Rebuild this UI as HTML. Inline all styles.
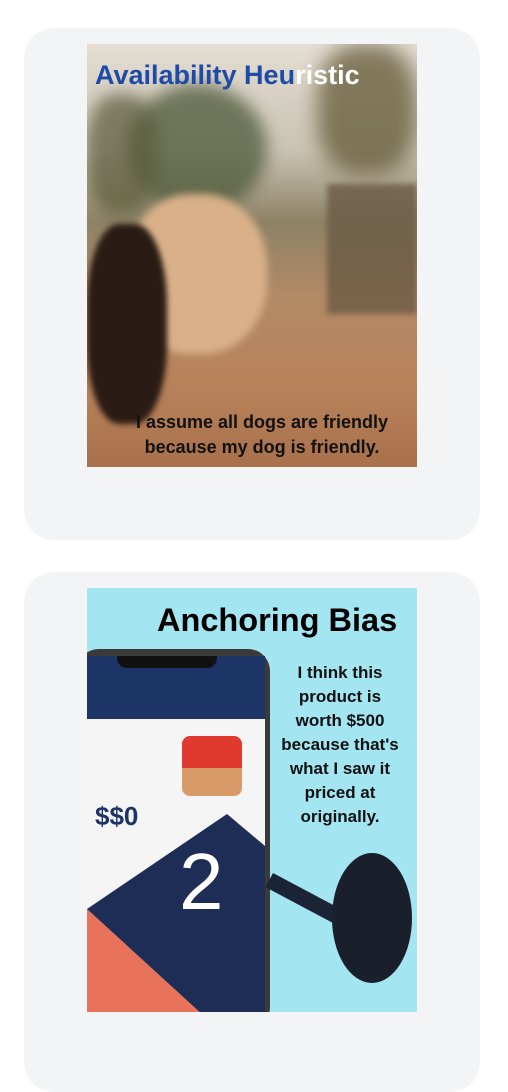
<!DOCTYPE html>
<html><head><style>
body{margin:0;width:508px;height:1066px;background:#fff;position:relative;overflow:hidden;font-family:"Liberation Sans",sans-serif}
.card{position:absolute;left:24px;width:456px;background:#f3f4f6;border-radius:30px}
.img{position:absolute;left:87px;width:330px;overflow:hidden}
.t{position:absolute;font-weight:bold;white-space:nowrap}
</style></head><body>
<div class="card" style="top:28px;height:512px"></div>
<div class="card" style="top:572px;height:520px"></div>

<div class="img" style="top:44px;height:423px;background:linear-gradient(180deg,#e4ddd3 0%,#c9c3b2 25%,#8d8266 42%,#b38a66 60%,#b8825a 80%,#a8714c 100%)">
  <div style="position:absolute;left:40px;top:40px;width:140px;height:130px;border-radius:50%;background:#4e5a3a;opacity:.75;filter:blur(8px)"></div>
  <div style="position:absolute;left:0;top:50px;width:70px;height:120px;border-radius:40%;background:#5a5a3a;opacity:.7;filter:blur(8px)"></div>
  <div style="position:absolute;left:230px;top:0;width:100px;height:130px;border-radius:40%;background:#5d5330;opacity:.7;filter:blur(10px)"></div>
  <div style="position:absolute;left:240px;top:140px;width:90px;height:130px;background:#6b5a44;opacity:.8;filter:blur(3px)"></div>
  <div style="position:absolute;left:40px;top:150px;width:140px;height:160px;border-radius:45%;background:#d9b089;filter:blur(4px)"></div>
  <div style="position:absolute;left:0;top:180px;width:80px;height:200px;border-radius:40%;background:#2a1c14;filter:blur(3px)"></div>
  <div class="t" style="left:8px;top:16px;font-size:27px;color:#1f4aa8">Availability Heu<span style="color:#fff">ristic</span></div>
  <div class="t" style="left:45px;width:260px;text-align:center;top:366px;font-size:18px;line-height:25px;color:#111">I assume all dogs are friendly<br>because my dog is friendly.</div>
</div>

<div class="img" style="top:588px;height:424px;background:#a3e5f0">
  <div style="position:absolute;left:-10px;top:61px;width:193px;height:380px;border-radius:22px;background:#3a3a3a"></div>
  <div style="position:absolute;left:0;top:68px;width:178px;height:360px;background:#f5f5f5;overflow:hidden">
    <div style="position:absolute;left:0;top:0;width:178px;height:63px;background:#1d3466"></div>
    <div style="position:absolute;left:30px;top:0;width:100px;height:12px;background:#111;border-radius:0 0 10px 10px"></div>
    <svg style="position:absolute;left:0;top:0" width="178" height="360"><polygon points="0,253 0,360 117,360" fill="#e8735a"/><polygon points="0,253 140,158 178,190 178,360 117,360" fill="#1e2d55"/></svg>
    <div style="position:absolute;left:95px;top:80px;width:60px;height:40px;background:#e03a30;border-radius:8px"></div>
    <div style="position:absolute;left:95px;top:112px;width:60px;height:28px;background:#d99a6a;border-radius:0 0 8px 8px"></div>
    <div class="t" style="left:8px;top:145px;font-size:26px;color:#1d3466">$$0</div>
    <div class="t" style="left:92px;top:180px;font-size:80px;color:#fff;font-weight:normal">2</div>
  </div>
  <div style="position:absolute;left:186px;top:285px;width:90px;height:16px;background:#1b2436;transform:rotate(28deg);transform-origin:0 0"></div>
  <div style="position:absolute;left:245px;top:265px;width:80px;height:130px;border-radius:50%;background:#1a1f2c"></div>
  <div class="t" style="left:70px;top:14px;font-size:32.5px;color:#000">Anchoring Bias</div>
  <div class="t" style="left:183px;width:140px;text-align:center;top:73px;font-size:17px;line-height:24px;color:#111">I think this<br>product is<br>worth $500<br>because that's<br>what I saw it<br>priced at<br>originally.</div>
</div>
</body></html>
